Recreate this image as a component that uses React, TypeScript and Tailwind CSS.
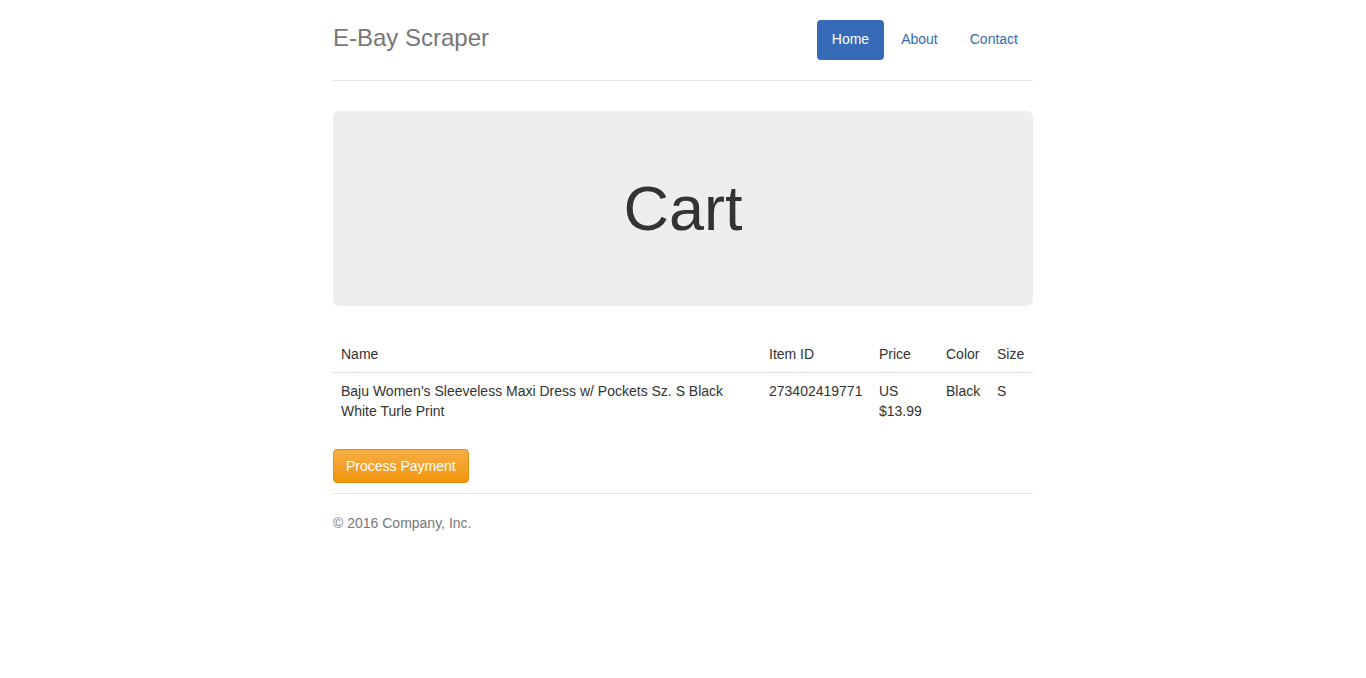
import clsx from 'clsx';

const navItems = [
  { label: 'Home', active: true },
  { label: 'About', active: false },
  { label: 'Contact', active: false },
];

const columns = [
  { label: 'Name', width: 'w-[428px]' },
  { label: 'Item ID', width: 'w-[110px]' },
  { label: 'Price', width: 'w-[67px]' },
  { label: 'Color', width: 'w-[51px]' },
  { label: 'Size', width: 'w-[44px]' },
];

const cartItems = [
  {
    name: "Baju Women's Sleeveless Maxi Dress w/ Pockets Sz. S Black White Turle Print",
    itemId: '273402419771',
    price: 'US $13.99',
    color: 'Black',
    size: 'S',
  },
];

export default function App() {
  return (
    <div className="min-h-screen bg-white font-['Liberation_Sans',Arial,sans-serif] text-sm leading-5 text-[#333]">
      <div className="mx-auto w-[700px] pt-5 pb-5">
        <Header />

        <div className="mb-[30px] flex h-[195px] items-center justify-center rounded-md bg-[#eee]">
          <h1 className="text-[63px] leading-[1.1] text-[#333]">Cart</h1>
        </div>

        <table className="mb-5 w-full table-fixed border-collapse">
          <colgroup>
            {columns.map(col => (
              <col key={col.label} className={col.width} />
            ))}
          </colgroup>
          <thead>
            <tr className="border-b border-[#ddd]">
              {columns.map(col => (
                <th key={col.label} className="p-2 text-left align-top font-normal">
                  {col.label}
                </th>
              ))}
            </tr>
          </thead>
          <tbody>
            {cartItems.map(item => (
              <tr key={item.itemId}>
                <td className="p-2 align-top">{item.name}</td>
                <td className="p-2 align-top">{item.itemId}</td>
                <td className="p-2 align-top">{item.price}</td>
                <td className="p-2 align-top">{item.color}</td>
                <td className="p-2 align-top">{item.size}</td>
              </tr>
            ))}
          </tbody>
        </table>

        <div className="mb-2.5">
          <button className="rounded border border-[#e38d13] bg-gradient-to-b from-[#f6ae42] to-[#f29500] px-3 py-1.5 text-sm leading-5 text-white">
            Process Payment
          </button>
        </div>

        <footer className="border-t border-[#e5e5e5] pt-[19px] text-[#777]">
          <p className="mb-2.5">© 2016 Company, Inc.</p>
        </footer>
      </div>
    </div>
  );
}

function Header() {
  return (
    <div className="mb-[30px] flex items-start justify-between border-b border-[#e5e5e5] pb-5">
      <h3 className="text-2xl leading-9 text-[#777]">E-Bay Scraper</h3>
      <nav className="flex gap-0.5">
        {navItems.map(item => (
          <a
            key={item.label}
            href="#"
            className={clsx(
              'rounded px-[15px] pt-[9px] pb-[11px] text-sm leading-5',
              item.active ? 'bg-[#346ab6] text-white' : 'text-[#346ab6]'
            )}
          >
            {item.label}
          </a>
        ))}
      </nav>
    </div>
  );
}
